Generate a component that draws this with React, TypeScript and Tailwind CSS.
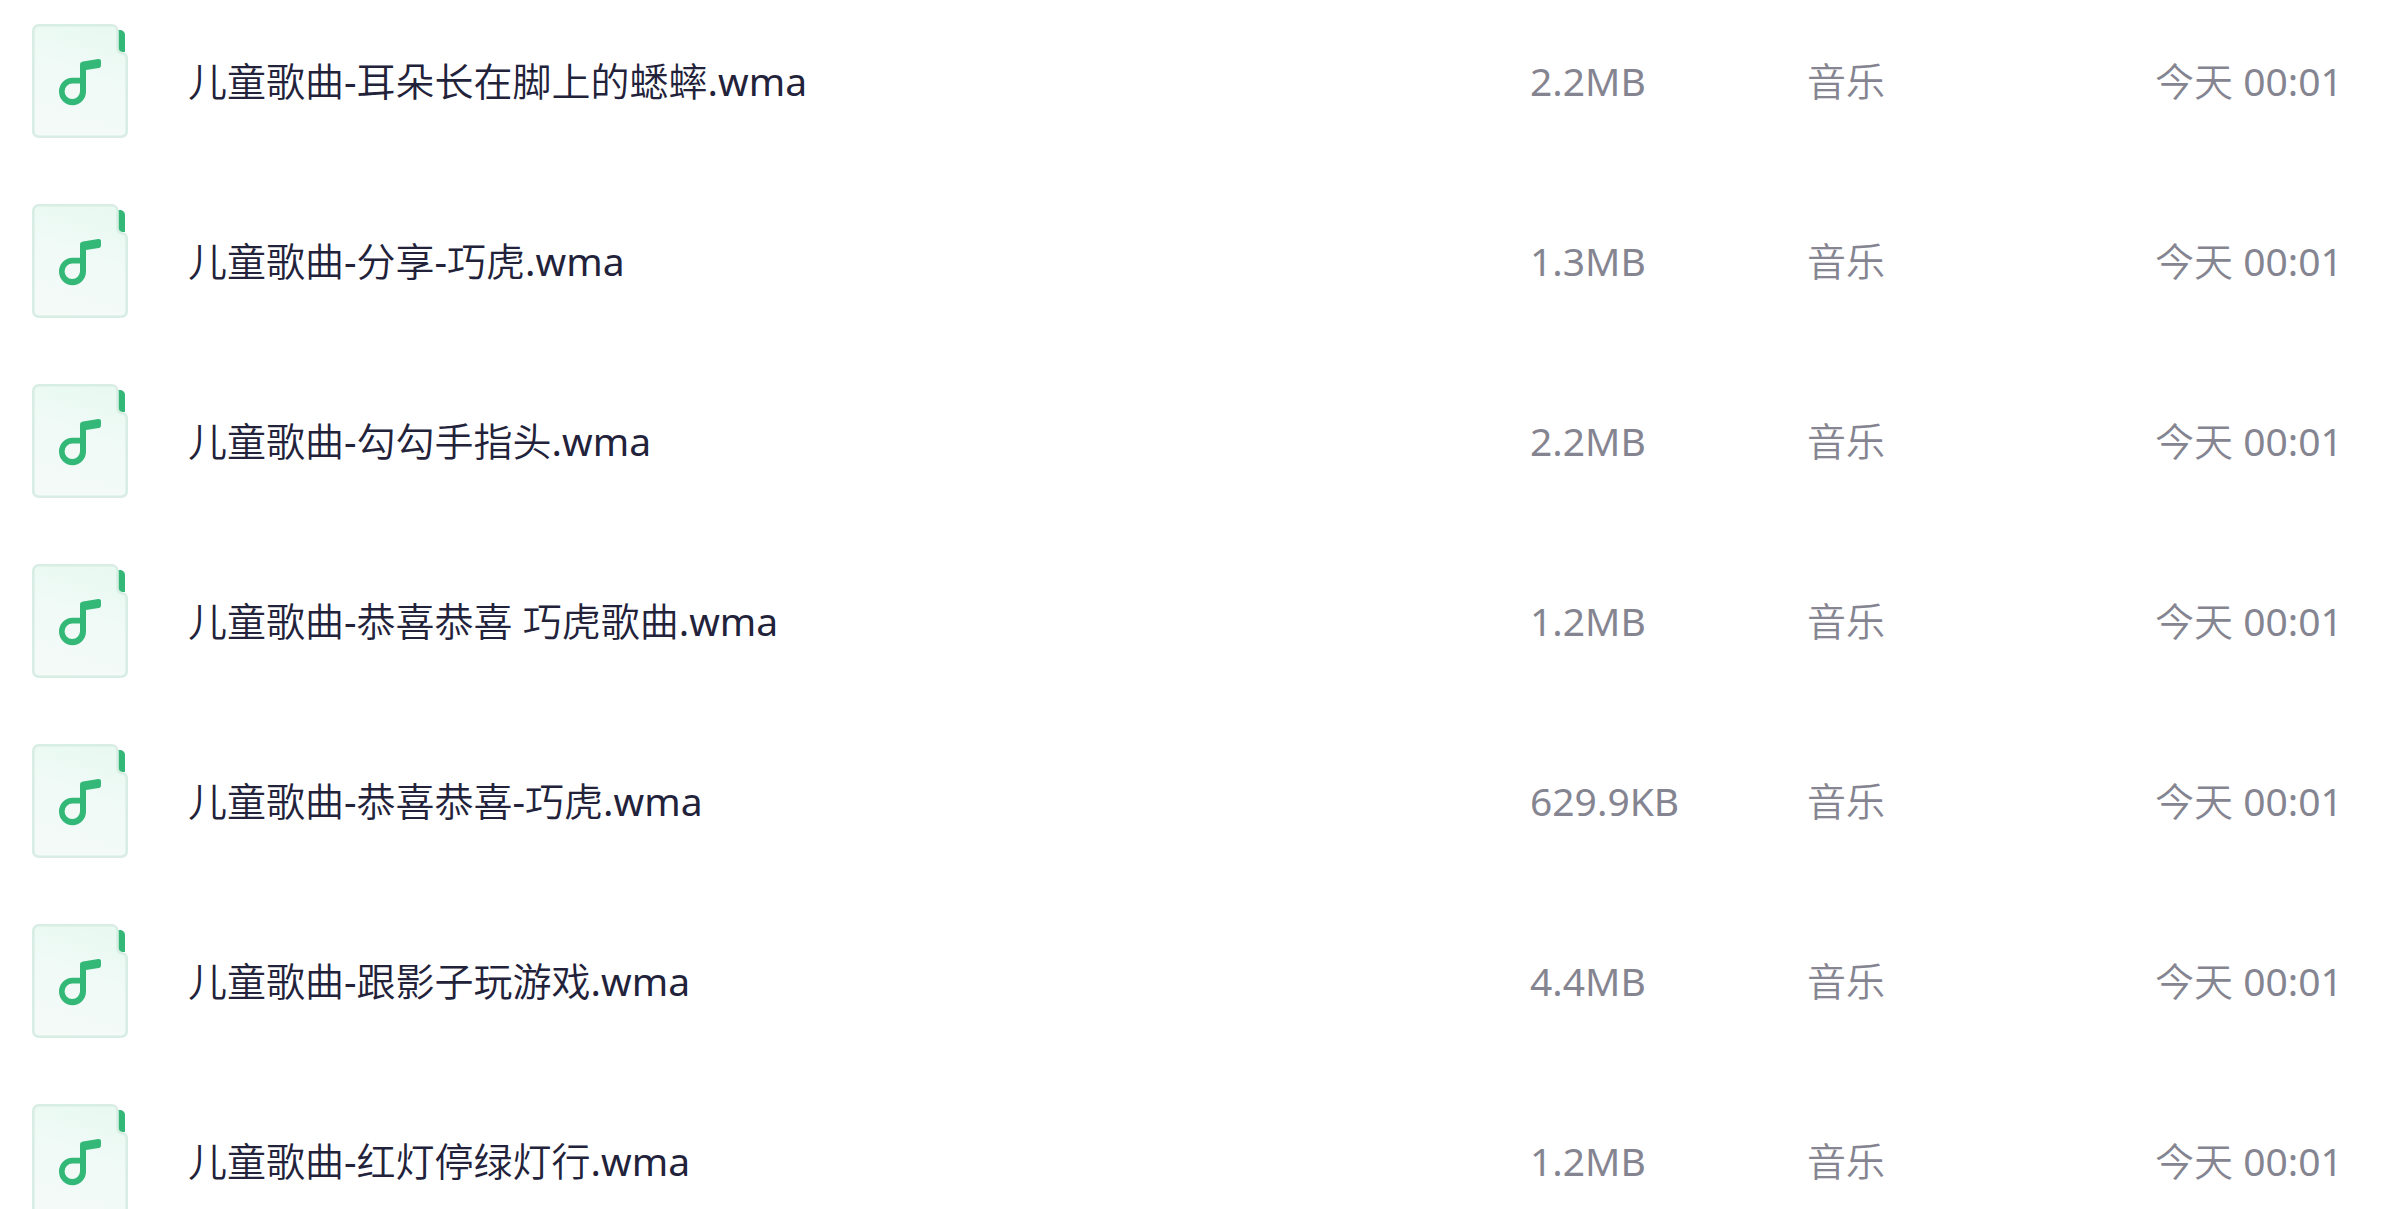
type Song = { name: string; size: string; kind: string; date: string };

const songs: Song[] = [
  { name: "儿童歌曲-耳朵长在脚上的蟋蟀.wma", size: "2.2MB", kind: "音乐", date: "今天 00:01" },
  { name: "儿童歌曲-分享-巧虎.wma", size: "1.3MB", kind: "音乐", date: "今天 00:01" },
  { name: "儿童歌曲-勾勾手指头.wma", size: "2.2MB", kind: "音乐", date: "今天 00:01" },
  { name: "儿童歌曲-恭喜恭喜 巧虎歌曲.wma", size: "1.2MB", kind: "音乐", date: "今天 00:01" },
  { name: "儿童歌曲-恭喜恭喜-巧虎.wma", size: "629.9KB", kind: "音乐", date: "今天 00:01" },
  { name: "儿童歌曲-跟影子玩游戏.wma", size: "4.4MB", kind: "音乐", date: "今天 00:01" },
  { name: "儿童歌曲-红灯停绿灯行.wma", size: "1.2MB", kind: "音乐", date: "今天 00:01" },
];

function MusicFileIcon() {
  return (
    <svg viewBox="0 0 96 114" className="h-[114px] w-24 shrink-0" fill="none" aria-hidden="true">
      <defs>
        <linearGradient id="sheet" x1="70" y1="0" x2="30" y2="114" gradientUnits="userSpaceOnUse">
          <stop offset="0" stopColor="#e8f9f1" />
          <stop offset="0.5" stopColor="#f1faf7" />
          <stop offset="1" stopColor="#f4faf8" />
        </linearGradient>
      </defs>
      <path d="M86 6H88C91 6 93 8.500 93 11V28H90C88 28 86 26 86 24Z" fill="#34b878" />
      <path
        d="M7 1.300H79.500C83 1.300 85.500 3.500 85.500 7V24C85.500 27.500 87.500 28.800 90 29.300C93 29.800 94.700 31.500 94.700 34.500V107C94.700 110.500 92.500 112.700 89 112.700H7C3.500 112.700 1.300 110.500 1.300 107V7C1.300 3.500 3.500 1.300 7 1.300Z"
        fill="url(#sheet)"
        stroke="#d8ede4"
        strokeWidth="2.600"
      />
      <path
        fillRule="evenodd"
        d="M40.500 53.800H48V41C48 39 49 37.900 51 37.600L66.300 35C68 34.800 69 35.600 69 37.200V41C69 42.800 68.300 43.700 66.700 44L54 46V67.500A13.500 13.700 0 1 1 40.500 53.800ZM40.500 59.600H48V67.300A7.700 7.700 0 1 1 40.500 59.600Z"
        fill="#34b878"
      />
    </svg>
  );
}

export default function App() {
  return (
    <main className="h-screen overflow-hidden bg-white font-['Noto_Sans','Noto_Sans_CJK_SC_DemiLight','Noto_Sans_CJK_SC_Light','Noto_Sans_CJK_SC',sans-serif] text-[39px] leading-[52px]">
      <table className="w-full table-fixed border-collapse text-left" aria-label="文件列表">
        <colgroup>
          <col />
          <col className="w-[277px]" />
          <col className="w-[348px]" />
          <col className="w-[227px]" />
        </colgroup>
        <tbody>
          {songs.map((song) => (
            <tr key={song.name} className="whitespace-nowrap text-[#858591]">
              <td className="pt-6 pb-[42px] pl-8">
                <div className="flex items-center gap-[60px]">
                  <MusicFileIcon />
                  <span className="truncate text-[#22223a]">{song.name}</span>
                </div>
              </td>
              <td className="pt-6 pb-[42px]">{song.size}</td>
              <td className="pt-6 pb-[42px]">{song.kind}</td>
              <td className="pt-6 pb-[42px]">{song.date}</td>
            </tr>
          ))}
        </tbody>
      </table>
    </main>
  );
}
